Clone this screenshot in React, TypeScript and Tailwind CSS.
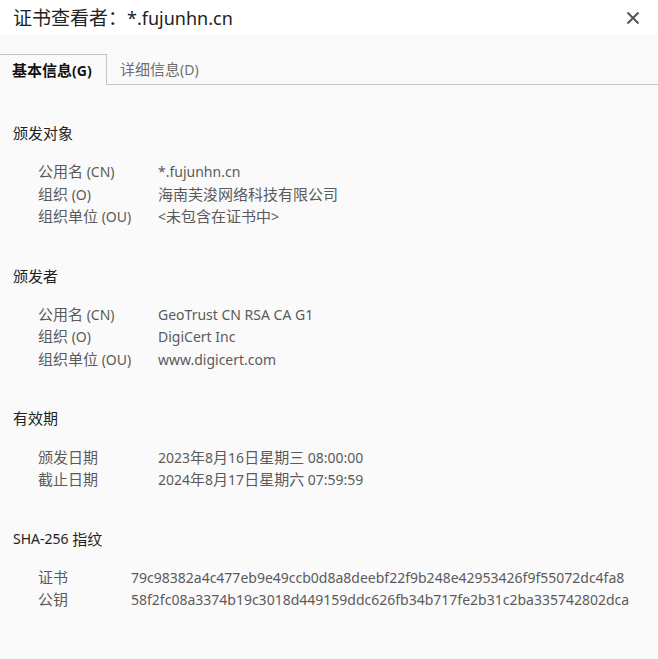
import React from "react";

const font = { fontFamily: '"Segoe UI", "Noto Sans", "Noto Sans CJK SC", sans-serif' };

function T({ s, cjk = "text-[15px]" }: { s: string; cjk?: string }) {
  const parts = s.match(/([\u3000-\u303f\u4e00-\u9fff\uff00-\uffef]+|[^\u3000-\u303f\u4e00-\u9fff\uff00-\uffef]+)/g) || [];
  return (
    <>
      {parts.map((p, i) =>
        /[\u3000-\u303f\u4e00-\u9fff\uff00-\uffef]/.test(p) ? (
          <span key={i} className={cjk}>{p}</span>
        ) : (
          <span key={i}>{p}</span>
        )
      )}
    </>
  );
}

function Section({ title, rows, labelW = "w-[120px]" }: { title: string; rows: [string, string][]; labelW?: string }) {
  return (
    <div>
      <div className="h-[22px] flex items-center text-[14px] text-[#222] whitespace-pre">
        <T s={title} />
      </div>
      <div className="pl-[25px] pt-[16px] text-[14px] text-[#5a5a5a]">
        {rows.map(([l, v]) => (
          <div key={l} className="flex h-[22.6px] items-center whitespace-pre">
            <div className={`${labelW} shrink-0`}>
              <T s={l} />
            </div>
            <div className="whitespace-nowrap">
              <T s={v} />
            </div>
          </div>
        ))}
      </div>
    </div>
  );
}

export default function App() {
  return (
    <div className="w-[658px] h-[659px] bg-[#fafafa] overflow-hidden" style={font}>
      <div className="h-[35px] bg-white flex items-center justify-between pl-[13px] pr-[18px]">
        <div className="text-[18px] text-[#222] leading-none pt-[2px] whitespace-pre">
          <T s="证书查看者：*.fujunhn.cn" cjk="text-[19px]" />
        </div>
        <svg width="14" height="14" viewBox="0 0 14 14" className="mt-[1px]">
          <path d="M1.5 1.5 L12.5 12.5 M12.5 1.5 L1.5 12.5" stroke="#555" strokeWidth="2" />
        </svg>
      </div>
      <div className="pt-[19px] flex items-end">
        <div className="h-[31px] w-[107px] border-t border-r border-[#c4c4c4] flex items-center pl-[12px] text-[14px] font-bold text-[#111] whitespace-pre">
          <T s="基本信息(G)" />
        </div>
        <div className="flex-1 h-[31px] border-b border-[#c4c4c4] flex items-center pl-[13px] text-[14px] text-[#707070] whitespace-pre">
          <T s="详细信息(D)" />
        </div>
      </div>
      <div className="pl-[13px] pt-[37px] flex flex-col gap-[37px]">
        <Section
          title="颁发对象"
          rows={[
            ["公用名 (CN)", "*.fujunhn.cn"],
            ["组织 (O)", "海南芙浚网络科技有限公司"],
            ["组织单位 (OU)", "<未包含在证书中>"],
          ]}
        />
        <Section
          title="颁发者"
          rows={[
            ["公用名 (CN)", "GeoTrust CN RSA CA G1"],
            ["组织 (O)", "DigiCert Inc"],
            ["组织单位 (OU)", "www.digicert.com"],
          ]}
        />
        <Section
          title="有效期"
          rows={[
            ["颁发日期", "2023年8月16日星期三 08:00:00"],
            ["截止日期", "2024年8月17日星期六 07:59:59"],
          ]}
        />
        <Section
          title="SHA-256 指纹"
          labelW="w-[93px]"
          rows={[
            ["证书", "79c98382a4c477eb9e49ccb0d8a8deebf22f9b248e42953426f9f55072dc4fa8"],
            ["公钥", "58f2fc08a3374b19c3018d449159ddc626fb34b717fe2b31c2ba335742802dca"],
          ]}
        />
      </div>
    </div>
  );
}
